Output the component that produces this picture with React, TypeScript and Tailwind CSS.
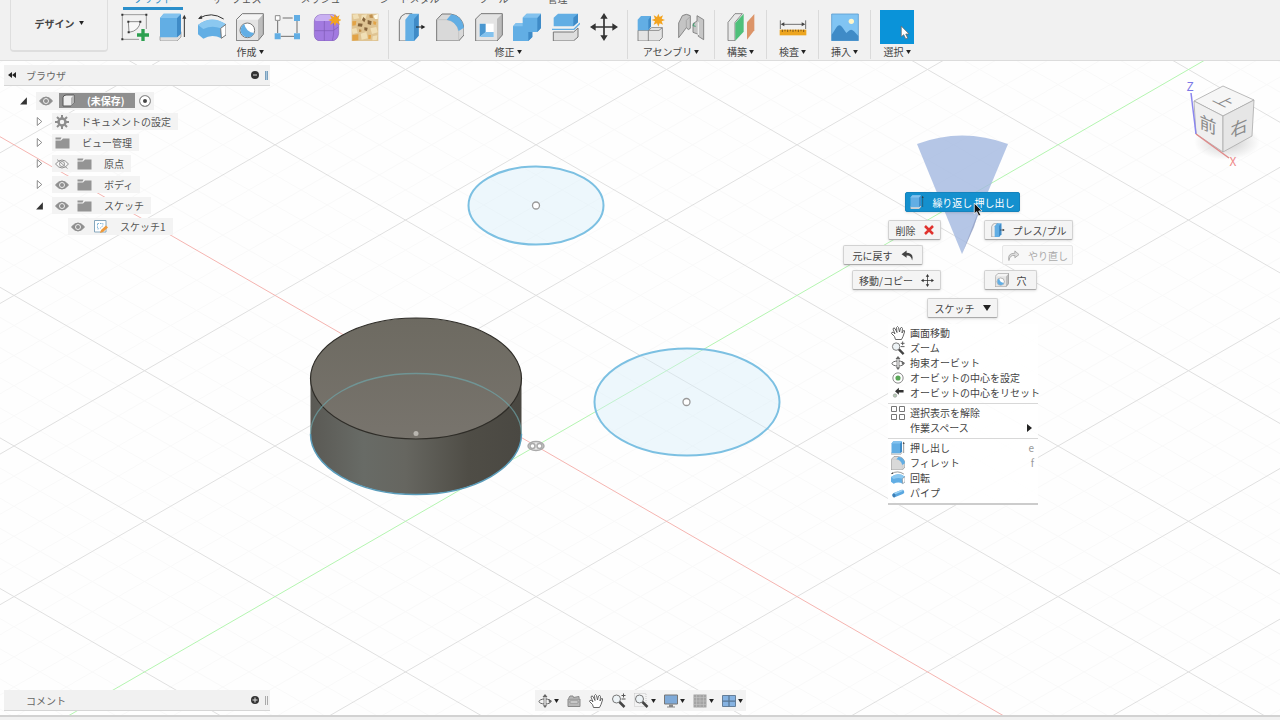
import React from 'react';

interface IconProps {
  className?: string;
}

interface GlyphProps extends IconProps {
  box: string;
  children: React.ReactNode;
}

const Glyph: React.FC<GlyphProps> = ({ box, className = 'w-7 h-7', children }) => (
  <svg viewBox={box} className={`shrink-0 ${className}`} fill="none" strokeLinejoin="round" aria-hidden="true">
    {children}
  </svg>
);

const Caret = () => (
  <svg viewBox="0 0 6 5" className="w-[5px] h-1 shrink-0" aria-hidden="true">
    <path d="M0 0h6L3 5z" fill="#222" />
  </svg>
);

/* Toolbar icons */

const SketchIcon: React.FC<IconProps> = ({ className }) => (
  <Glyph box="0 0 84 84" className={className}>
    <path d="M4 5H76M4 5V79M4 79H54M76 5V48" stroke="#888" strokeWidth="2.5" />
    <path d="M22 26H58Q54 54 24 58Z" fill="#f8f8f8" stroke="#777" strokeWidth="2.5" />
    <path d="M1 2h6v6H1zM73 2h6v6h-6zM1 76h6v6H1zM19 23h6v6h-6zM55 23h6v6h-6zM20 55h6v6h-6z" fill="#333" />
    <path d="M66 48V84M48 66H84" stroke="#2da050" strokeWidth="10" />
  </Glyph>
);

const ExtrudeIcon: React.FC<IconProps> = ({ className }) => (
  <Glyph box="0 0 84 84" className={className}>
    <path d="M3 70L14 60 66 56V72L54 84H7Q3 84 3 80Z" fill="#ddd" stroke="#888" strokeWidth="2" />
    <path d="M3 15L14 2H62Q66 2 66 7V62L54 73H3Z" fill="#62aee4" />
    <path d="M54 15L66 4V62L54 73Z" fill="#3f8bc7" />
    <path d="M3 15L14 2H66L54 15Z" fill="#83c2ee" />
    <path d="M76 72V12" stroke="#333" strokeWidth="3" />
    <path d="M70 17L76 5L82 17Z" fill="#333" />
  </Glyph>
);

const RevolveIcon: React.FC<IconProps> = ({ className }) => (
  <Glyph box="0 0 84 84" className={className}>
    <path d="M3 16Q40 -6 77 18" stroke="#333" strokeWidth="3" />
    <path d="M0 18L10 7L13 17Z" fill="#333" />
    <path d="M0 36Q20 20 42 20T84 34V66L70 76Q42 62 16 77L0 64Z" fill="#62aee4" />
    <path d="M0 36Q42 4 84 34L68 46Q42 36 16 48Z" fill="#8bc8f0" />
    <path d="M68 46L84 34V66L70 76Z" fill="#fff" stroke="#777" strokeWidth="3" />
  </Glyph>
);

const HoleIcon: React.FC<IconProps> = ({ className }) => (
  <Glyph box="0 0 84 84" className={className}>
    <path d="M1 20L19 2H82V64L66 83H1Z" fill="#e4e4e4" />
    <path d="M66 20L82 3V64L66 83Z" fill="#bdbdbd" />
    <path d="M1 20L19 2H82L66 20Z" fill="#f4f4f4" />
    <path d="M1 20L19 2H82V64L66 83H1Z" stroke="#777" strokeWidth="3" />
    <circle cx="34" cy="52" r="22" fill="#fff" stroke="#777" strokeWidth="3" />
    <path d="M25 33A21 21 0 1 0 54 60A32 32 0 0 1 25 33Z" fill="#62aee4" />
  </Glyph>
);

const PatternIcon: React.FC<IconProps> = ({ className }) => (
  <Glyph box="0 0 84 84" className={className}>
    <path d="M26 15H56M11 24V60M69 24V60M20 70H60" stroke="#555" strokeWidth="2.5" />
    <path d="M4 8h14v14H4z" fill="#fff" stroke="#777" strokeWidth="2.5" />
    <path d="M60 6h18v18H60zM2 61h18v18H2zM60 61h18v18H60z" fill="#62aee4" />
  </Glyph>
);

const FormIcon: React.FC<IconProps> = ({ className }) => (
  <Glyph box="0 0 84 84" className={className}>
    <path d="M4 25Q5 8 22 5H58Q77 7 77 25V62Q74 81 57 84H22Q4 82 4 65Z" fill="#a27ae0" stroke="#8260b8" strokeWidth="2" />
    <path d="M5 22Q8 8 22 5H56Q68 8 64 18L48 24H10Z" fill="#c9b0f2" />
    <path d="M34 24V83M5 53H60L76 42M60 25Q66 50 58 83" stroke="#7e5bb5" strokeWidth="2" />
    <path d="M66 2L70 13 80 6 76 17 86 21 76 25 81 36 70 29 66 40 62 29 51 36 56 25 46 21 56 17 51 6 62 13Z" fill="#f3a420" />
  </Glyph>
);

const VoronoiIcon: React.FC<IconProps> = ({ className }) => (
  <Glyph box="0 0 84 84" className={className}>
    <path d="M2 2H82V84H2Z" fill="#dfc493" />
    <path d="M5 5L20 3 25 16 8 19ZM32 6L48 4 43 18 30 21ZM2 48L16 45 20 59 5 63ZM58 46L76 42 80 58 63 63ZM29 62L46 57 50 76 32 80ZM65 70L79 67 77 81 64 82Z" fill="#f0dfb6" />
    <path d="M37 12L44 19 40 28 33 21ZM50 21L62 25 60 36 50 33ZM22 31L35 32 33 41 20 40ZM40 43L50 44 48 54 40 52Z" fill="#86653c" />
    <path d="M4 25L16 24 14 37 4 38ZM4 66L22 64 22 82 4 83ZM52 65L60 66 59 77 52 78ZM67 24L76 27 74 36 67 34Z" fill="#e2a347" />
    <path d="M55 6L64 4 66 15 56 14ZM24 49L31 50 31 56 24 57Z" fill="#c08f4c" />
    <path d="M67 8L81 3 80 18 72 18Z" fill="#fffbea" />
  </Glyph>
);

const PressPullIcon: React.FC<IconProps> = ({ className }) => (
  <Glyph box="0 0 84 84" className={className}>
    <path d="M4 22Q8 6 22 2H42L30 18V84H4Z" fill="#ececec" stroke="#777" strokeWidth="3" />
    <path d="M22 20L36 2H62V68L48 84H22Z" fill="#62aee4" />
    <path d="M48 18L62 2V68L48 84Z" fill="#3f8bc7" />
    <path d="M54 42H72" stroke="#222" strokeWidth="3" />
    <path d="M70 35L82 42 70 49Z" fill="#222" />
  </Glyph>
);

const FilletIcon: React.FC<IconProps> = ({ className }) => (
  <Glyph box="0 0 84 84" className={className}>
    <path d="M2 20L18 3H44Q80 8 84 46V66L68 84H2Z" fill="#d9d9d9" stroke="#777" strokeWidth="3" />
    <path d="M2 20H30Q64 24 68 56V84" stroke="#bbb" strokeWidth="2" />
    <path d="M32 20L46 4Q78 8 84 44L68 54Q60 24 32 20Z" fill="#62aee4" />
  </Glyph>
);

const ShellIcon: React.FC<IconProps> = ({ className }) => (
  <Glyph box="0 0 84 84" className={className}>
    <path d="M2 18L18 2H82V66L66 84H2Z" fill="#e4e4e4" />
    <path d="M66 18L82 2V66L66 84Z" fill="#bcbcbc" />
    <path d="M2 18L18 2H82V66L66 84H2Z" stroke="#777" strokeWidth="3" />
    <path d="M14 32H56V72H14Z" fill="#fff" />
    <path d="M14 32H32V58L14 72Z" fill="#4a97d0" />
    <path d="M32 57H56V72H14Z" fill="#83c2ee" />
  </Glyph>
);

const CombineIcon: React.FC<IconProps> = ({ className }) => (
  <Glyph box="0 0 84 84" className={className}>
    <path d="M0 40L9 30H29V14L41 2H84V45L73 57H58V72L46 84H0Z" fill="#62aee4" />
    <path d="M73 14L84 2V45L73 57ZM46 57H58V72L46 84Z" fill="#3f8bc7" />
    <path d="M29 14L41 2H84L73 14ZM0 40L9 30H29V40Z" fill="#83c2ee" />
  </Glyph>
);

const SplitIcon: React.FC<IconProps> = ({ className }) => (
  <Glyph box="0 0 84 84" className={className}>
    <path d="M5 14L18 2H78V28L64 40H5Z" fill="#62aee4" />
    <path d="M64 14L78 2V28L64 40Z" fill="#3f8bc7" />
    <path d="M0 49H66L84 31" stroke="#62aee4" strokeWidth="4" />
    <path d="M4 57H65L78 45V72L64 84H4Z" fill="#dedede" stroke="#777" strokeWidth="3" />
  </Glyph>
);

const MoveIcon: React.FC<IconProps> = ({ className }) => (
  <Glyph box="0 0 84 84" className={className}>
    <path d="M42 12V72M12 42H72" stroke="#333" strokeWidth="5" />
    <path d="M42 0L53 17H31ZM42 84L31 67H53ZM0 42L17 31V53ZM84 42L67 53V31Z" fill="#333" />
  </Glyph>
);

const ComponentIcon: React.FC<IconProps> = ({ className }) => (
  <Glyph box="0 0 84 84" className={className}>
    <path d="M3 52H66L76 44V74L66 84H3Z" fill="#e4e4e4" stroke="#777" strokeWidth="2.5" />
    <path d="M34 52V84M34 52L44 44H76" stroke="#777" strokeWidth="2.5" />
    <path d="M2 20L12 9H42V40L34 52H2Z" fill="#62aee4" />
    <path d="M34 20L42 9V40L34 52Z" fill="#3f8bc7" />
    <path d="M64 2L68 12 78 7 74 17 84 21 74 25 78 35 68 31 64 41 60 31 50 35 54 25 44 21 54 17 50 7 60 12Z" fill="#f3a420" />
  </Glyph>
);

const JointIcon: React.FC<IconProps> = ({ className }) => (
  <Glyph box="0 0 84 84" className={className}>
    <path d="M5 30L16 8Q28 0 40 8V46Q34 54 28 44L16 60 5 74Z" fill="#c4c4c4" stroke="#777" strokeWidth="2.5" />
    <path d="M28 44V22L38 12" stroke="#999" strokeWidth="2" />
    <path d="M48 32L60 24V8L80 20V80L64 70V64L48 58Z" fill="#c6c6c6" stroke="#777" strokeWidth="2.5" />
    <path d="M64 28V66" stroke="#eee" strokeWidth="4" />
    <path d="M52 30L48 38 56 40" stroke="#40a070" strokeWidth="3" />
  </Glyph>
);

const PlaneIcon: React.FC<IconProps> = ({ className }) => (
  <Glyph box="0 0 84 84" className={className}>
    <path d="M3 28L24 2H46L24 28V83H3Z" fill="#e8e8e8" stroke="#777" strokeWidth="2.5" />
    <path d="M25 30L50 2V56L25 83Z" fill="#4fc07a" />
    <path d="M60 28L82 3V52L60 80Z" fill="#dc9468" />
  </Glyph>
);

const MeasureIcon: React.FC<IconProps> = ({ className }) => (
  <Glyph box="0 0 84 84" className={className}>
    <path d="M4 22V48M80 22V48M10 34H74" stroke="#555" strokeWidth="2.5" />
    <path d="M5 34L16 28V40ZM79 34L68 40V28Z" fill="#444" />
    <path d="M2 50H82V67H2Z" fill="#eda51f" />
    <path d="M10 50v7M18 50v5M26 50v7M34 50v5M42 50v7M50 50v5M58 50v7M66 50v5M74 50v7" stroke="#704b12" strokeWidth="2.5" />
  </Glyph>
);

const PictureIcon: React.FC<IconProps> = ({ className }) => (
  <Glyph box="0 0 84 84" className={className}>
    <path d="M2 3H82V83H2Z" fill="#80c4f3" stroke="#5c9ed0" strokeWidth="2.5" />
    <path d="M2 65L17 42Q25 31 35 44L46 60 52 55Q60 45 69 55L82 69V83H2Z" fill="#3f8bc7" />
    <circle cx="61" cy="25" r="8" fill="#fff6c9" />
  </Glyph>
);

const CursorArrow: React.FC<IconProps & { dark?: boolean }> = ({ className, dark }) => (
  <Glyph box="0 0 9 14" className={className}>
    <path
      d="M1 1V11L3.300 9 5.200 13 7 12.200 5.200 8.400H8.300Z"
      fill={dark ? '#111' : '#fff'}
      stroke={dark ? '#fff' : '#666'}
      strokeWidth=".7"
    />
  </Glyph>
);

const SelectIcon = () => (
  <span className="flex h-[34px] w-[34px] items-end justify-end bg-[#0a93d9] p-1">
    <CursorArrow className="h-[15px] w-[10px]" />
  </span>
);

/* Small icons */

const EyeIcon: React.FC<{ off?: boolean }> = ({ off }) => (
  <Glyph box="0 0 28 20" className="h-[10px] w-[14px]">
    <path d="M1 10Q14 -6 27 10Q14 26 1 10Z" fill={off ? '#f6f6f6' : '#8f8f8f'} stroke="#8f8f8f" strokeWidth="2" />
    <circle cx="14" cy="10" r="5" fill={off ? 'none' : '#8f8f8f'} stroke={off ? '#999' : '#eee'} strokeWidth="2" />
    {off && <path d="M4 1L25 19" stroke="#999" strokeWidth="2" />}
  </Glyph>
);

const FolderIcon = () => (
  <Glyph box="0 0 30 24" className="h-3 w-[15px]">
    <path d="M1 1H13L11 5H1ZM1 7H12L16 3H29V23H1Z" fill="#949494" />
  </Glyph>
);

const GearIcon = () => (
  <Glyph box="0 0 28 28" className="h-[14px] w-[14px]">
    <circle cx="14" cy="14" r="7" stroke="#8c8c8c" strokeWidth="5" />
    <path d="M14 0V6M14 22V28M0 14H6M22 14H28M4 4L8 8M20 20L24 24M24 4L20 8M8 20L4 24" stroke="#8c8c8c" strokeWidth="4" />
  </Glyph>
);

const SketchPageIcon = () => (
  <Glyph box="0 0 30 30" className="h-[15px] w-[15px]">
    <path d="M3 3H26V26H3Z" fill="#fff" stroke="#86a7bd" strokeWidth="2" />
    <path d="M9 9H20Q20 18 9 20Z" stroke="#7db4d8" strokeWidth="2" strokeDasharray="3 2" />
    <path d="M14 28L16 22 26 13 30 17 20 26Z" fill="#ee9a3c" />
  </Glyph>
);

const BodyIcon = () => (
  <Glyph box="0 0 26 26" className="h-[13px] w-[13px]">
    <path d="M2 7Q3 2 8 2H24V17L18 24H2Z" fill="#efefef" stroke="#555" strokeWidth="2" />
    <path d="M18 8L24 2V17L18 24Z" fill="#b5b5b5" />
  </Glyph>
);

const TwistyIcon: React.FC<{ open?: boolean }> = ({ open }) => (
  <Glyph box="0 0 12 16" className="h-[9px] w-[7px]">
    {open ? <path d="M12 2V15H0Z" fill="#333" /> : <path d="M2 1L10 8 2 15Z" fill="#fff" stroke="#777" strokeWidth="1.500" />}
  </Glyph>
);

const OrbitIcon: React.FC<IconProps> = ({ className }) => (
  <Glyph box="0 0 28 28" className={className}>
    <ellipse cx="14" cy="15" rx="12" ry="5" stroke="#666" strokeWidth="2" />
    <path d="M12 4H16V24H12Z" fill="#fff" stroke="#666" strokeWidth="1.500" />
    <path d="M9 6L14 0 19 6ZM10 23L14 28 18 23ZM21 10L28 14 22 18Z" fill="#666" />
  </Glyph>
);

const ZoomIcon: React.FC<IconProps & { framed?: boolean; sign?: boolean }> = ({ className, framed, sign }) => (
  <Glyph box="0 0 30 30" className={className}>
    {framed && <path d="M1 1H24V27H1Z" stroke="#bbb" strokeWidth="1.500" strokeDasharray="2 2" />}
    <circle cx="11" cy="12" r="8" fill="#edf3f6" stroke="#777" strokeWidth="2" />
    <path d="M17 18L27 28" stroke="#444" strokeWidth="5" />
    {sign && <path d="M25 1V9M21 5H29M21 12H29" stroke="#555" strokeWidth="2" />}
  </Glyph>
);

const HandIcon = () => (
  <Glyph box="0 0 28 28" className="h-[14px] w-[14px]">
    <path
      d="M9 27L7 21 1 15Q1 11 5 13L8 16 4 6Q5 2 8 5L12 13 11 3Q13 -1 15 3L17 12 19 4Q22 1 23 5L22 14 25 9Q28 8 27 12L24 21 21 27Z"
      fill="#fff"
      stroke="#555"
      strokeWidth="1.800"
    />
  </Glyph>
);

const CenterIcon = () => (
  <Glyph box="0 0 28 28" className="h-3 w-[14px]">
    <circle cx="14" cy="14" r="12" fill="#fff" stroke="#777" strokeWidth="2" />
    <circle cx="14" cy="14" r="6" fill="#59a657" />
  </Glyph>
);

const ResetIcon = () => (
  <Glyph box="0 0 28 28" className="h-3 w-[14px]">
    <path d="M7 10L16 2V7H27V13H16V18Z" fill="#333" />
    <circle cx="7" cy="20" r="4" fill="#b6cdb6" stroke="#999" strokeWidth="1.500" />
  </Glyph>
);

const GridSelectIcon = () => (
  <Glyph box="0 0 28 28" className="h-[14px] w-[14px]">
    <path d="M1 1h10v10H1zM17 1h10v10H17zM1 17h10v10H1zM17 17h10v10H17z" stroke="#777" strokeWidth="2" fill="#fff" />
  </Glyph>
);

const PipeIcon = () => (
  <Glyph box="0 0 28 28" className="h-[14px] w-[14px]">
    <path d="M7 18L22 12" stroke="#5aa7e0" strokeWidth="9" strokeLinecap="round" />
    <path d="M8 15L22 9" stroke="#9bd0f3" strokeWidth="3" strokeLinecap="round" />
    <ellipse cx="6" cy="19" rx="3" ry="4" fill="#3f7fb5" />
  </Glyph>
);

const ArrowIcon: React.FC<{ redo?: boolean }> = ({ redo }) => (
  <Glyph box="0 0 28 24" className="h-[11px] w-[13px]">
    {redo ? (
      <path d="M17 2L26 10 17 17V12Q6 10 4 23 0 7 17 7Z" fill="#ddd" stroke="#aaa" strokeWidth="2" />
    ) : (
      <path d="M12 1L1 9 12 17V12Q22 11 24 23 29 7 12 6Z" fill="#444" />
    )}
  </Glyph>
);

const DeleteIcon = () => (
  <Glyph box="0 0 20 20" className="h-[10px] w-[10px]">
    <path d="M2 2L18 18M18 2L2 18" stroke="#e0322e" strokeWidth="5" />
  </Glyph>
);

const CameraIcon = () => (
  <Glyph box="0 0 28 28" className="h-[14px] w-[14px]">
    <path d="M3 9L6 4H12L13 7 24 5V9M2 10H26V25H2Z" fill="#b8b8b8" stroke="#888" strokeWidth="2" />
    <path d="M6 14H22V18H6Z" fill="#eee" stroke="#888" strokeWidth="1.500" />
  </Glyph>
);

const MonitorIcon = () => (
  <Glyph box="0 0 28 28" className="h-[14px] w-[14px]">
    <path d="M1 2H27V20H1Z" fill="#7faad8" stroke="#777" strokeWidth="2" />
    <path d="M10 21H18V25H22V27H6V25H10Z" fill="#888" />
  </Glyph>
);

const GridIcon = () => (
  <Glyph box="0 0 28 28" className="h-[14px] w-[14px]">
    <path d="M1 1H27V27H1Z" fill="#a4a4a4" />
    <path d="M1 7H27M1 14H27M1 21H27M7 1V27M14 1V27M21 1V27" stroke="#c4c4c4" strokeWidth="1.200" />
  </Glyph>
);

const ViewportsIcon = () => (
  <Glyph box="0 0 28 24" className="h-3 w-[14px]">
    <path d="M1 1H27V23H1Z" fill="#86b3e2" stroke="#667f99" strokeWidth="2" />
    <path d="M14 1V23M1 12H27" stroke="#587795" strokeWidth="2.500" />
  </Glyph>
);

/* Header */

const tabs = ['ソリッド', 'サーフェス', 'メッシュ', 'シートメタル', 'ツール', '管理'];

interface ToolGroup {
  label: string;
  width: string;
  icons: React.ReactNode[];
}

const toolGroups: ToolGroup[] = [
  {
    label: '作成',
    width: 'w-[268px] pr-[9px]',
    icons: [<SketchIcon />, <ExtrudeIcon />, <RevolveIcon />, <HoleIcon />, <PatternIcon />, <FormIcon />, <VoronoiIcon />],
  },
  {
    label: '修正',
    width: 'w-[239px] px-[9px]',
    icons: [<PressPullIcon />, <FilletIcon />, <ShellIcon />, <CombineIcon />, <SplitIcon />, <MoveIcon />],
  },
  { label: 'アセンブリ', width: 'w-[87px] px-[9px]', icons: [<ComponentIcon />, <JointIcon />] },
  { label: '構築', width: 'w-[52px] px-[9px]', icons: [<PlaneIcon />] },
  { label: '検査', width: 'w-[52px] px-[9px]', icons: [<MeasureIcon />] },
  { label: '挿入', width: 'w-[52px] px-[9px]', icons: [<PictureIcon />] },
  { label: '選択', width: 'w-[52px] px-[9px]', icons: [<SelectIcon />] },
];

const Header = () => (
  <header className="flex h-[61px] shrink-0 gap-[13px] overflow-hidden border-b border-[#dcdcdc] bg-[#f1f1f1] pl-[10px]">
    <button className="flex h-[52px] w-[98px] items-center justify-center gap-1 rounded-b border-x border-b-2 border-[#dedede] pb-1 font-bold text-[#444]">
      デザイン <Caret />
    </button>
    <div className="flex flex-col">
      <nav className="flex h-[10px] gap-[19px] pl-[2px]">
        {tabs.map((tab, i) => (
          <button
            key={tab}
            className={`flex h-[10px] items-end border-b-[3px] px-[10px] pb-[3px] leading-[10px] ${
              i === 0 ? 'border-[#2b8fcb] text-[#2b8fcb]' : 'border-transparent text-[#555]'
            }`}
          >
            {tab}
          </button>
        ))}
      </nav>
      <div className="flex">
        {toolGroups.map((group, i) => (
          <div
            key={group.label}
            className={`flex h-[49px] flex-col ${group.width} ${i < toolGroups.length - 1 ? 'border-r border-[#dadada]' : ''}`}
          >
            <div className={`flex h-[34px] items-center ${group.icons.length > 1 ? 'justify-between' : 'justify-center'}`}>
              {group.icons.map((icon, n) => (
                <button key={n} aria-label={`${group.label} ${n + 1}`}>
                  {icon}
                </button>
              ))}
            </div>
            <button className="flex items-center justify-center gap-[2px] whitespace-nowrap leading-[15px]">
              {group.label}
              <Caret />
            </button>
          </div>
        ))}
      </div>
    </div>
  </header>
);

/* Model space */

const ORIGIN = { x: 536, y: 446 };
const SLOPE = 0.577;
const MINOR_STEP = 30.12;

const gridLine = (offset: number, direction: number) => {
  const at = (x: number) => ORIGIN.y + offset + direction * SLOPE * (x - ORIGIN.x);
  return `M0 ${at(0).toFixed(1)}L1280 ${at(1280).toFixed(1)}`;
};

const steps = Array.from({ length: 61 }, (_, i) => i - 30);
const minorGrid = steps.filter((n) => n % 5 !== 0).map((n) => gridLine(n * MINOR_STEP, 1) + gridLine(n * MINOR_STEP, -1)).join('');
const majorGrid = steps.filter((n) => n % 5 === 0 && n !== 0).map((n) => gridLine(n * MINOR_STEP, 1) + gridLine(n * MINOR_STEP, -1)).join('');

const ModelCanvas = () => (
  <svg
    viewBox="0 61 1280 654"
    preserveAspectRatio="xMidYMid slice"
    className="absolute inset-0 h-full w-full"
    fill="none"
    aria-label="モデル"
  >
    <defs>
      <linearGradient id="side" x1="0" x2="1">
        <stop offset="0" stopColor="#5a5954" />
        <stop offset=".25" stopColor="#686b66" />
        <stop offset=".45" stopColor="#666660" />
        <stop offset=".75" stopColor="#4f4d46" />
        <stop offset="1" stopColor="#4a4842" />
      </linearGradient>
      <linearGradient id="cap" x1="0" x2="0" y1="0" y2="1">
        <stop offset="0" stopColor="#6d6a61" />
        <stop offset="1" stopColor="#78746d" />
      </linearGradient>
    </defs>
    <path d={minorGrid} stroke="#f9f9f9" />
    <path d={majorGrid} stroke="#e0e0e0" />
    <path d={gridLine(0, -1)} stroke="#b4f5b0" />
    <path d={gridLine(0, 1)} stroke="#f5b4b0" />

    <g fill="#d5eefb" fillOpacity=".4" stroke="#7cc0e2" strokeWidth="2">
      <ellipse cx="536" cy="205.500" rx="67.500" ry="39" />
      <ellipse cx="687" cy="402" rx="92.500" ry="53.500" />
    </g>
    <g fill="#fff" stroke="#999" strokeWidth="1.300">
      <circle cx="536" cy="205.500" r="3.500" />
      <circle cx="686.500" cy="402" r="3.500" />
    </g>

    <path d="M310.500 378.500V434A105.500 60.500 0 0 0 521.500 434V378.500Z" fill="url(#side)" />
    <path d="M310.500 434A105.500 60.500 0 0 0 521.500 434" stroke="#5b9dbb" strokeWidth="1.500" />
    <ellipse cx="416" cy="378.500" rx="105.500" ry="60.500" fill="url(#cap)" stroke="#2f2d28" strokeWidth="1.200" />
    <path d="M310.500 434A105.500 60.500 0 0 1 521.500 434" stroke="#6fa9ae" strokeOpacity=".65" strokeWidth="1.300" />
    <circle cx="416" cy="433.500" r="2.500" fill="#b9b6b0" />

    <g stroke="#aaa" strokeWidth="1.500">
      <ellipse cx="536" cy="446" rx="8" ry="4.500" fill="#e9e9e9" />
      <circle cx="532.500" cy="446" r="2.500" fill="#fff" />
      <circle cx="539.500" cy="446" r="2.500" fill="#fff" />
    </g>
  </svg>
);

const ViewCube = () => (
  <svg viewBox="1180 76 80 94" className="h-[94px] w-20" fill="none" aria-label="ビューキューブ">
    <defs>
      <radialGradient id="cubeShadow">
        <stop offset="0" stopColor="#999" stopOpacity=".5" />
        <stop offset="1" stopColor="#999" stopOpacity="0" />
      </radialGradient>
    </defs>
    <ellipse cx="1227" cy="142" rx="33" ry="18" fill="url(#cubeShadow)" />
    <g stroke="#aaa" strokeWidth=".8" strokeLinejoin="round">
      <path d="M1194 101L1223 86 1254 100 1223 116Z" fill="#f6f6f6" />
      <path d="M1194 101L1223 116V152L1196 134Z" fill="#efefef" />
      <path d="M1223 116L1254 100 1252 136 1223 152Z" fill="#e6e6e6" />
    </g>
    <path d="M1191 93L1196 134" stroke="#8a86ee" strokeWidth="1.500" />
    <path d="M1196 134L1229 158" stroke="#e08a8a" strokeWidth="1.500" />
    <g fill="#8a8a8a" fontSize="17" textAnchor="middle">
      <text transform="translate(1208 131) skewY(24)">前</text>
      <text transform="translate(1239 134) skewY(-24)">右</text>
      <text transform="matrix(.85 .42 -.85 .42 1219 104)">上</text>
    </g>
    <text x="1190" y="91" fill="#7c78e6" fontSize="12" textAnchor="middle">Z</text>
    <text x="1233" y="166" fill="#e88" fontSize="12" textAnchor="middle">X</text>
  </svg>
);

/* Browser panel */

interface TreeRow {
  label: string;
  level: string;
  open?: boolean;
  leaf?: boolean;
  icons: React.ReactNode[];
}

const treeRows: TreeRow[] = [
  { label: 'ドキュメントの設定', level: 'pl-[30px]', icons: [<GearIcon />] },
  { label: 'ビュー管理', level: 'pl-[30px]', icons: [<FolderIcon />] },
  { label: '原点', level: 'pl-[30px]', icons: [<EyeIcon off />, <FolderIcon />] },
  { label: 'ボディ', level: 'pl-[30px]', icons: [<EyeIcon />, <FolderIcon />] },
  { label: 'スケッチ', level: 'pl-[30px]', open: true, icons: [<EyeIcon />, <FolderIcon />] },
  { label: 'スケッチ1', level: 'pl-[46px]', leaf: true, icons: [<EyeIcon />, <SketchPageIcon />] },
];

const PanelBar: React.FC<{ title: string; collapsible?: boolean }> = ({ title, collapsible }) => (
  <div className="flex h-[21px] w-[266px] items-center border-b border-[#d6d6d6] bg-[#f1f1f1] pr-[2px] pl-1">
    <span className="w-[18px]">
      {collapsible && (
        <svg viewBox="0 0 16 12" className="h-[6px] w-2" aria-hidden="true">
          <path d="M8 0V12L0 6ZM16 0V12L8 6Z" fill="#222" />
        </svg>
      )}
    </span>
    <h2 className="grow text-[#666]">{title}</h2>
    <button aria-label={`${title} 表示`} className="mr-[6px]">
      <svg viewBox="0 0 16 16" className="h-2 w-2">
        <circle cx="8" cy="8" r="8" fill="#333" />
        <path d={collapsible ? 'M4 8H12' : 'M3 8H13M8 3V13'} stroke="#ddd" strokeWidth="2" />
      </svg>
    </button>
    <span className={`h-[9px] w-[3px] border-x ${collapsible ? 'border-[#7aa0bd] bg-[#a9c6dc]' : 'border-[#aaa]'}`} />
  </div>
);

const BrowserPanel = () => (
  <section className="mt-1 ml-1">
    <PanelBar title="ブラウザ" collapsible />
    <ul className="pt-1">
      <li className="flex h-[21px] items-center pl-[14px]">
        <button className="flex w-[18px] justify-start pl-[2px]" aria-label="折りたたむ">
          <TwistyIcon open />
        </button>
        <div className="flex h-[18px] items-center gap-1 bg-[#f2f2f2] px-[3px]">
          <button aria-label="表示"><EyeIcon /></button>
          <span className="ml-[2px] flex h-[15px] w-[76px] items-center gap-3 bg-[#8f8f8f] pl-[3px] font-bold text-white">
            <BodyIcon /> (未保存)
          </span>
          <input
            type="radio"
            aria-label="アクティブ"
            defaultChecked
            className="h-3 w-3 appearance-none rounded-full border border-[#999] bg-[#444] shadow-[inset_0_0_0_3px_white]"
          />
        </div>
      </li>
      {treeRows.map((row) => (
        <li key={row.label} className={`flex h-[21px] items-center ${row.level}`}>
          {row.leaf ? (
            <span className="w-[18px]" />
          ) : (
            <button className="flex w-[18px] pl-[2px]" aria-label={`${row.label} 展開`}>
              <TwistyIcon open={row.open} />
            </button>
          )}
          <div className="flex h-[17px] items-center gap-2 bg-[#f3f3f3] pr-[7px] pl-[3px]">
            {row.icons.map((icon, i) => (
              <span key={i}>{icon}</span>
            ))}
            <span className="pl-1 whitespace-nowrap text-[#555]">{row.label}</span>
          </div>
        </li>
      ))}
    </ul>
  </section>
);

/* Marking menu */

interface MarkingItem {
  label: string;
  place: string;
  icon: React.ReactNode;
  iconFirst?: boolean;
  tone?: 'active' | 'faded';
}

const markingItems: MarkingItem[] = [
  { label: '繰り返し 押し出し', place: 'left-[62px] top-[57px] w-[115px]', icon: <ExtrudeIcon className="h-[14px] w-[14px]" />, iconFirst: true, tone: 'active' },
  { label: '削除', place: 'left-[45px] top-[85px] w-[53px]', icon: <DeleteIcon /> },
  { label: 'プレス/プル', place: 'left-[141px] top-[85px] w-[89px]', icon: <PressPullIcon className="h-[14px] w-[14px]" />, iconFirst: true },
  { label: '元に戻す', place: 'left-0 top-[110px] w-20', icon: <ArrowIcon /> },
  { label: 'やり直し', place: 'left-[159px] top-[110px] w-[71px]', icon: <ArrowIcon redo />, iconFirst: true, tone: 'faded' },
  { label: '移動/コピー', place: 'left-[9px] top-[135px] w-[89px]', icon: <MoveIcon className="h-[13px] w-[13px]" /> },
  { label: '穴', place: 'left-[141px] top-[135px] w-[53px]', icon: <HoleIcon className="h-[14px] w-[14px]" />, iconFirst: true },
  { label: 'スケッチ', place: 'left-[84px] top-[163px] w-[71px]', icon: <svg viewBox="0 0 8 6" className="h-[6px] w-2"><path d="M0 0H8L4 6Z" fill="#222" /></svg> },
];

const tones = {
  normal: 'border-[#d2d2d2] border-b-[#aaa] bg-[#f4f4f4] text-[#444] shadow-sm',
  active: 'border-[#1583bd] bg-[#1490ce] text-white shadow-sm',
  faded: 'border-[#e6e6e6] bg-[#f8f8f8] text-[#aaa]',
};

interface MenuRow {
  label: string;
  icon?: React.ReactNode;
  shortcut?: string;
  submenu?: boolean;
}

const menuSections: MenuRow[][] = [
  [
    { label: '画面移動', icon: <HandIcon /> },
    { label: 'ズーム', icon: <ZoomIcon sign className="h-[14px] w-[14px]" /> },
    { label: '拘束オービット', icon: <OrbitIcon className="h-[14px] w-[14px]" /> },
    { label: 'オービットの中心を設定', icon: <CenterIcon /> },
    { label: 'オービットの中心をリセット', icon: <ResetIcon /> },
  ],
  [
    { label: '選択表示を解除', icon: <GridSelectIcon /> },
    { label: '作業スペース', submenu: true },
  ],
  [
    { label: '押し出し', icon: <ExtrudeIcon className="h-[14px] w-[14px]" />, shortcut: 'e' },
    { label: 'フィレット', icon: <FilletIcon className="h-[14px] w-[14px]" />, shortcut: 'f' },
    { label: '回転', icon: <RevolveIcon className="h-[14px] w-[14px]" /> },
    { label: 'パイプ', icon: <PipeIcon /> },
  ],
];

const MarkingMenu = () => (
  <div className="absolute top-[74px] left-[843px] h-[370px] w-[230px]">
    <svg viewBox="0 0 230 120" className="absolute top-0 left-0 h-[120px] w-[230px]" aria-hidden="true">
      <path d="M119 119L74 9Q119 -8 165 9Z" fill="#a3b8e0" fillOpacity=".8" />
      <path d="M119 119L137 72 131 92Z" fill="#8c99bd" fillOpacity=".7" />
    </svg>
    {markingItems.map((item) => (
      <button
        key={item.label}
        disabled={item.tone === 'faded'}
        className={`absolute flex h-5 items-center justify-center gap-2 whitespace-nowrap rounded-[2px] border ${item.place} ${
          tones[item.tone ?? 'normal']
        } ${item.iconFirst ? 'flex-row-reverse' : ''}`}
      >
        {item.label}
        {item.icon}
      </button>
    ))}
    <div className="absolute top-[189px] left-[45px] w-[150px] border-b-2 border-[#ccc] bg-white/90 pt-px pb-[3px]" role="menu">
      {menuSections.map((section, i) => (
        <div key={i}>
          {i > 0 && <div className="mt-[3px] mb-px h-px bg-[#d8d8d8]" />}
          {section.map((row) => (
            <button key={row.label} role="menuitem" className="flex h-[15px] w-full items-center gap-[5px] pr-1 pl-[3px] leading-[15px]">
              <span className="flex w-[14px] shrink-0">{row.icon}</span>
              <span className="grow whitespace-nowrap text-left text-[#444]">{row.label}</span>
              {row.shortcut && <span className="text-[#999]">{row.shortcut}</span>}
              {row.submenu && (
                <svg viewBox="0 0 5 8" className="mr-[2px] h-2 w-[5px]">
                  <path d="M0 0V8L5 4Z" fill="#222" />
                </svg>
              )}
            </button>
          ))}
        </div>
      ))}
    </div>
    <CursorArrow dark className="absolute top-[67px] left-[130px] h-[15px] w-[10px]" />
  </div>
);

/* Bottom navigation */

const navTools = [
  { name: 'オービット', icon: <OrbitIcon className="h-[14px] w-[14px]" />, menu: true },
  { name: 'ビュー正面', icon: <CameraIcon /> },
  { name: '画面移動', icon: <HandIcon /> },
  { name: 'ズーム', icon: <ZoomIcon sign className="h-[15px] w-[15px]" /> },
  { name: 'フィット', icon: <ZoomIcon framed className="h-[15px] w-[15px]" />, menu: true },
  { name: '表示設定', icon: <MonitorIcon />, menu: true },
  { name: 'グリッド', icon: <GridIcon />, menu: true },
  { name: 'ビューポート', icon: <ViewportsIcon />, menu: true },
];

const App = () => (
  <div className="flex min-h-screen flex-col bg-[#f1f1f1] font-['Noto_Sans_CJK_JP',sans-serif] text-[10px] leading-[15px] text-[#444]">
    <Header />
    <main className="relative flex grow flex-col justify-between overflow-hidden bg-[#fefefe]">
      <ModelCanvas />
      <div className="relative flex items-start justify-between">
        <BrowserPanel />
        <div className="mt-[15px] mr-5">
          <ViewCube />
        </div>
      </div>
      <div className="relative grid grid-cols-[1fr_auto_1fr] items-end px-1 pb-1">
        <PanelBar title="コメント" />
        <nav className="flex h-[21px] items-center gap-2 bg-[#f3f3f3] px-[3px]">
          {navTools.map((tool) => (
            <button key={tool.name} aria-label={tool.name} className="flex items-center gap-[2px]">
              {tool.icon}
              {tool.menu && <Caret />}
            </button>
          ))}
        </nav>
      </div>
      <MarkingMenu />
    </main>
    <footer className="h-[5px] shrink-0 border-t-2 border-[#d2d2d2] bg-[#f1f1f1]" />
  </div>
);

export default App;
